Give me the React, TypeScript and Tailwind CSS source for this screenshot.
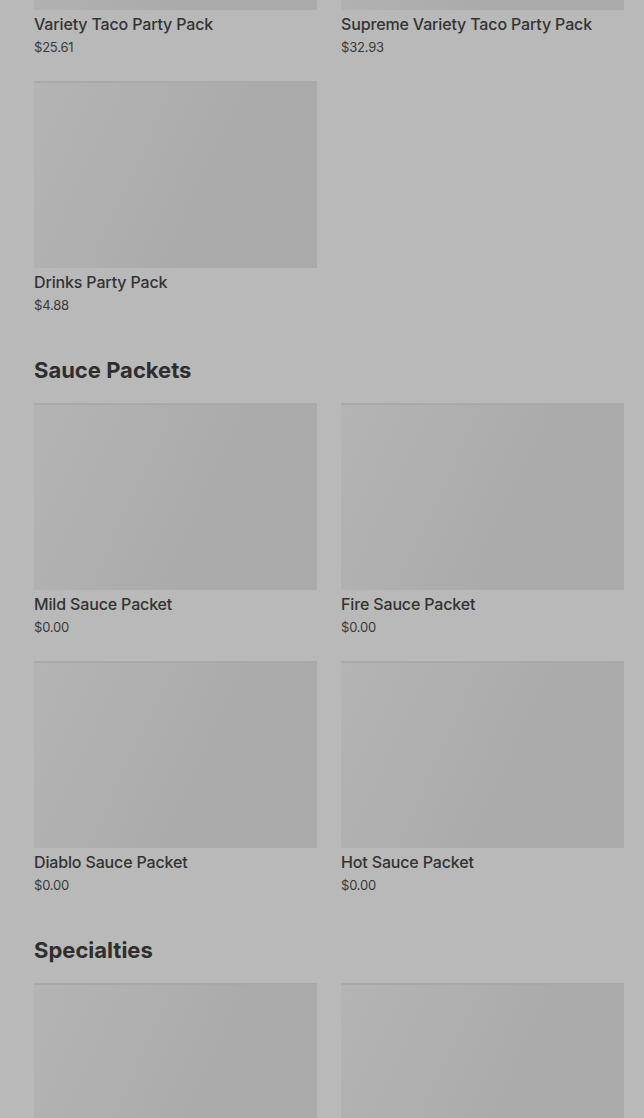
import React from "react";

type Item = { name: string; price: string };

const sections: { title?: string; items: Item[]; imagesOnly?: boolean }[] = [
  {
    items: [
      { name: "Variety Taco Party Pack", price: "$25.61" },
      { name: "Supreme Variety Taco Party Pack", price: "$32.93" },
      { name: "Drinks Party Pack", price: "$4.88" },
    ],
  },
  {
    title: "Sauce Packets",
    items: [
      { name: "Mild Sauce Packet", price: "$0.00" },
      { name: "Fire Sauce Packet", price: "$0.00" },
      { name: "Diablo Sauce Packet", price: "$0.00" },
      { name: "Hot Sauce Packet", price: "$0.00" },
    ],
  },
  {
    // rest of this section is below the fold
    title: "Specialties",
    imagesOnly: true,
    items: [
      { name: "specialty-1", price: "" },
      { name: "specialty-2", price: "" },
    ],
  },
];

const ItemCard = ({ item, imageOnly }: { item: Item; imageOnly?: boolean }) => (
  <div className="flex flex-col">
    <div className="h-[187px] w-full bg-[linear-gradient(115deg,#b4b4b4_0%,#afafaf_35%,#ababab_60%,#aaaaaa_100%)] border-t-2 border-[#a9a9a9]" />
    {!imageOnly && (
      <>
        <div className="mt-1 text-[16px] leading-5 font-medium text-[#333333] tracking-[-0.15px]">
          {item.name}
        </div>
        <div className="mt-1 text-[13px] leading-[18px] text-[#3a3a3a] tracking-[-0.2px]">
          {item.price}
        </div>
      </>
    )}
  </div>
);

export default function App() {
  return (
    <div
      className="h-[1118px] w-full overflow-hidden bg-[#b9b9b9]"
      style={{ fontFamily: "Inter, 'Noto Sans', sans-serif" }}
    >
      <div className="-mt-[177px] pl-[34px] pr-5 flex flex-col">
        {sections.map((s, i) => (
          <div key={i} className={i > 0 ? "mt-[42px]" : ""}>
            {s.title && (
              <h2 className="mb-[19px] text-[22px] leading-7 font-bold text-[#2e2e2e] tracking-[0px]">
                {s.title}
              </h2>
            )}
            <div className="grid grid-cols-2 gap-x-6 gap-y-[25px]">
              {s.items.map((it) => (
                <ItemCard key={it.name} item={it} imageOnly={s.imagesOnly} />
              ))}
            </div>
          </div>
        ))}
      </div>
    </div>
  );
}
